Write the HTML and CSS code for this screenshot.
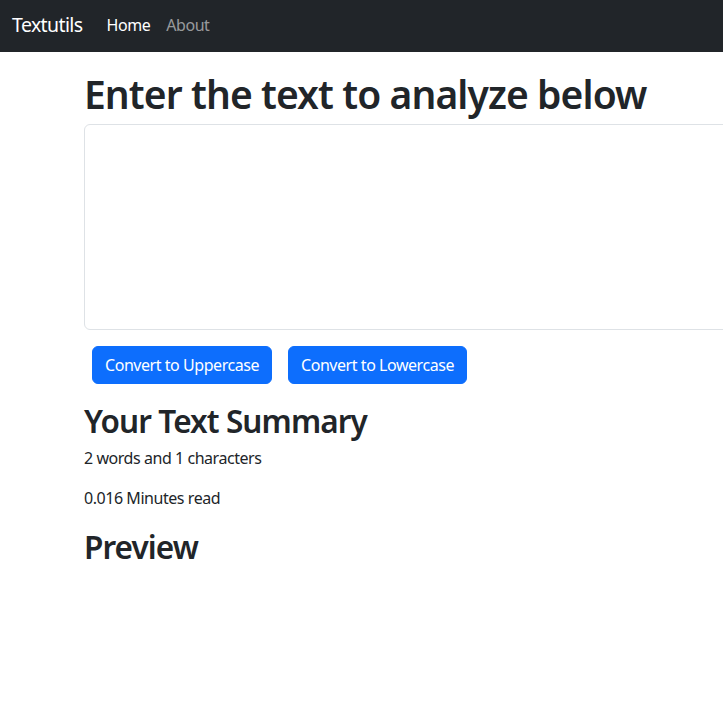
FILE: index.html
```html
<!DOCTYPE html>
<html lang="en">
<head>
<meta charset="utf-8">
<title>Textutils</title>
<link rel="stylesheet" href="styles.css">
</head>
<body>
<nav class="navbar">
  <a class="brand" href="#">Textutils</a>
  <ul class="nav">
    <li><a class="nav-link active" href="#">Home</a></li>
    <li><a class="nav-link" href="#">About</a></li>
  </ul>
</nav>
<div class="container">
  <h1 class="title">Enter the text to analyze below</h1>
  <textarea class="form-control" rows="8"></textarea>
  <div class="actions">
    <button class="btn">Convert to Uppercase</button>
    <button class="btn">Convert to Lowercase</button>
  </div>
</div>
<div class="container summary">
  <h2 class="subtitle">Your Text Summary</h2>
  <p class="line">2 words and 1 characters</p>
  <p class="line">0.016 Minutes read</p>
  <h2 class="subtitle">Preview</h2>
  <p class="line"></p>
</div>
</body>
</html>
```
FILE: styles.css
```css
* { box-sizing: border-box; }
html, body { overflow-x: hidden; }
body {
  margin: 0;
  font-family: "Noto Sans", "Open Sans", sans-serif;
  font-size: 16px;
  line-height: 24px;
  letter-spacing: -0.45px;
  color: #212529;
  background: #fff;
}
.navbar {
  background: #212529;
  height: 52px;
  display: flex;
  align-items: center;
  padding: 0 12px;
}
.brand {
  color: #fff;
  text-decoration: none;
  font-size: 19.5px;
  letter-spacing: -0.6px;
  margin-right: 16px;
  padding-bottom: 2px;
}
.nav {
  list-style: none;
  display: flex;
  margin: 0;
  padding: 0;
}
.nav-link {
  display: block;
  padding: 7px 8px 9px;
  color: rgba(255,255,255,.55);
  text-decoration: none;
  font-size: 16px;
}
.nav-link.active { color: #fff; }
.container {
  margin: 16px 0 16px 72px;
  padding: 0 12px;
  width: 960px;
}
.title {
  font-size: 39px;
  font-weight: 560;
  line-height: 48px;
  letter-spacing: -0.9px;
  padding-top: 2px;
  margin: 0 0 6px;
}
.form-control {
  display: block;
  width: 100%;
  height: 206px;
  border: 1px solid #dee2e6;
  border-radius: 6px;
  padding: 6px 12px;
  font: inherit;
  resize: vertical;
  margin-bottom: 16px;
}
.actions { display: flex; }
.btn {
  font: inherit;
  letter-spacing: -0.45px;
  color: #fff;
  background: #0d6efd;
  border: 1px solid #0d6efd;
  border-radius: 6px;
  padding: 6px 12px;
  margin: 0 8px;
  line-height: 24px;
}
.subtitle {
  font-size: 31.5px;
  font-weight: 560;
  line-height: 38.4px;
  letter-spacing: -0.9px;
  padding-top: 2px;
  margin: 0 0 6px;
}
.line { margin: 0 0 16px; }
```
